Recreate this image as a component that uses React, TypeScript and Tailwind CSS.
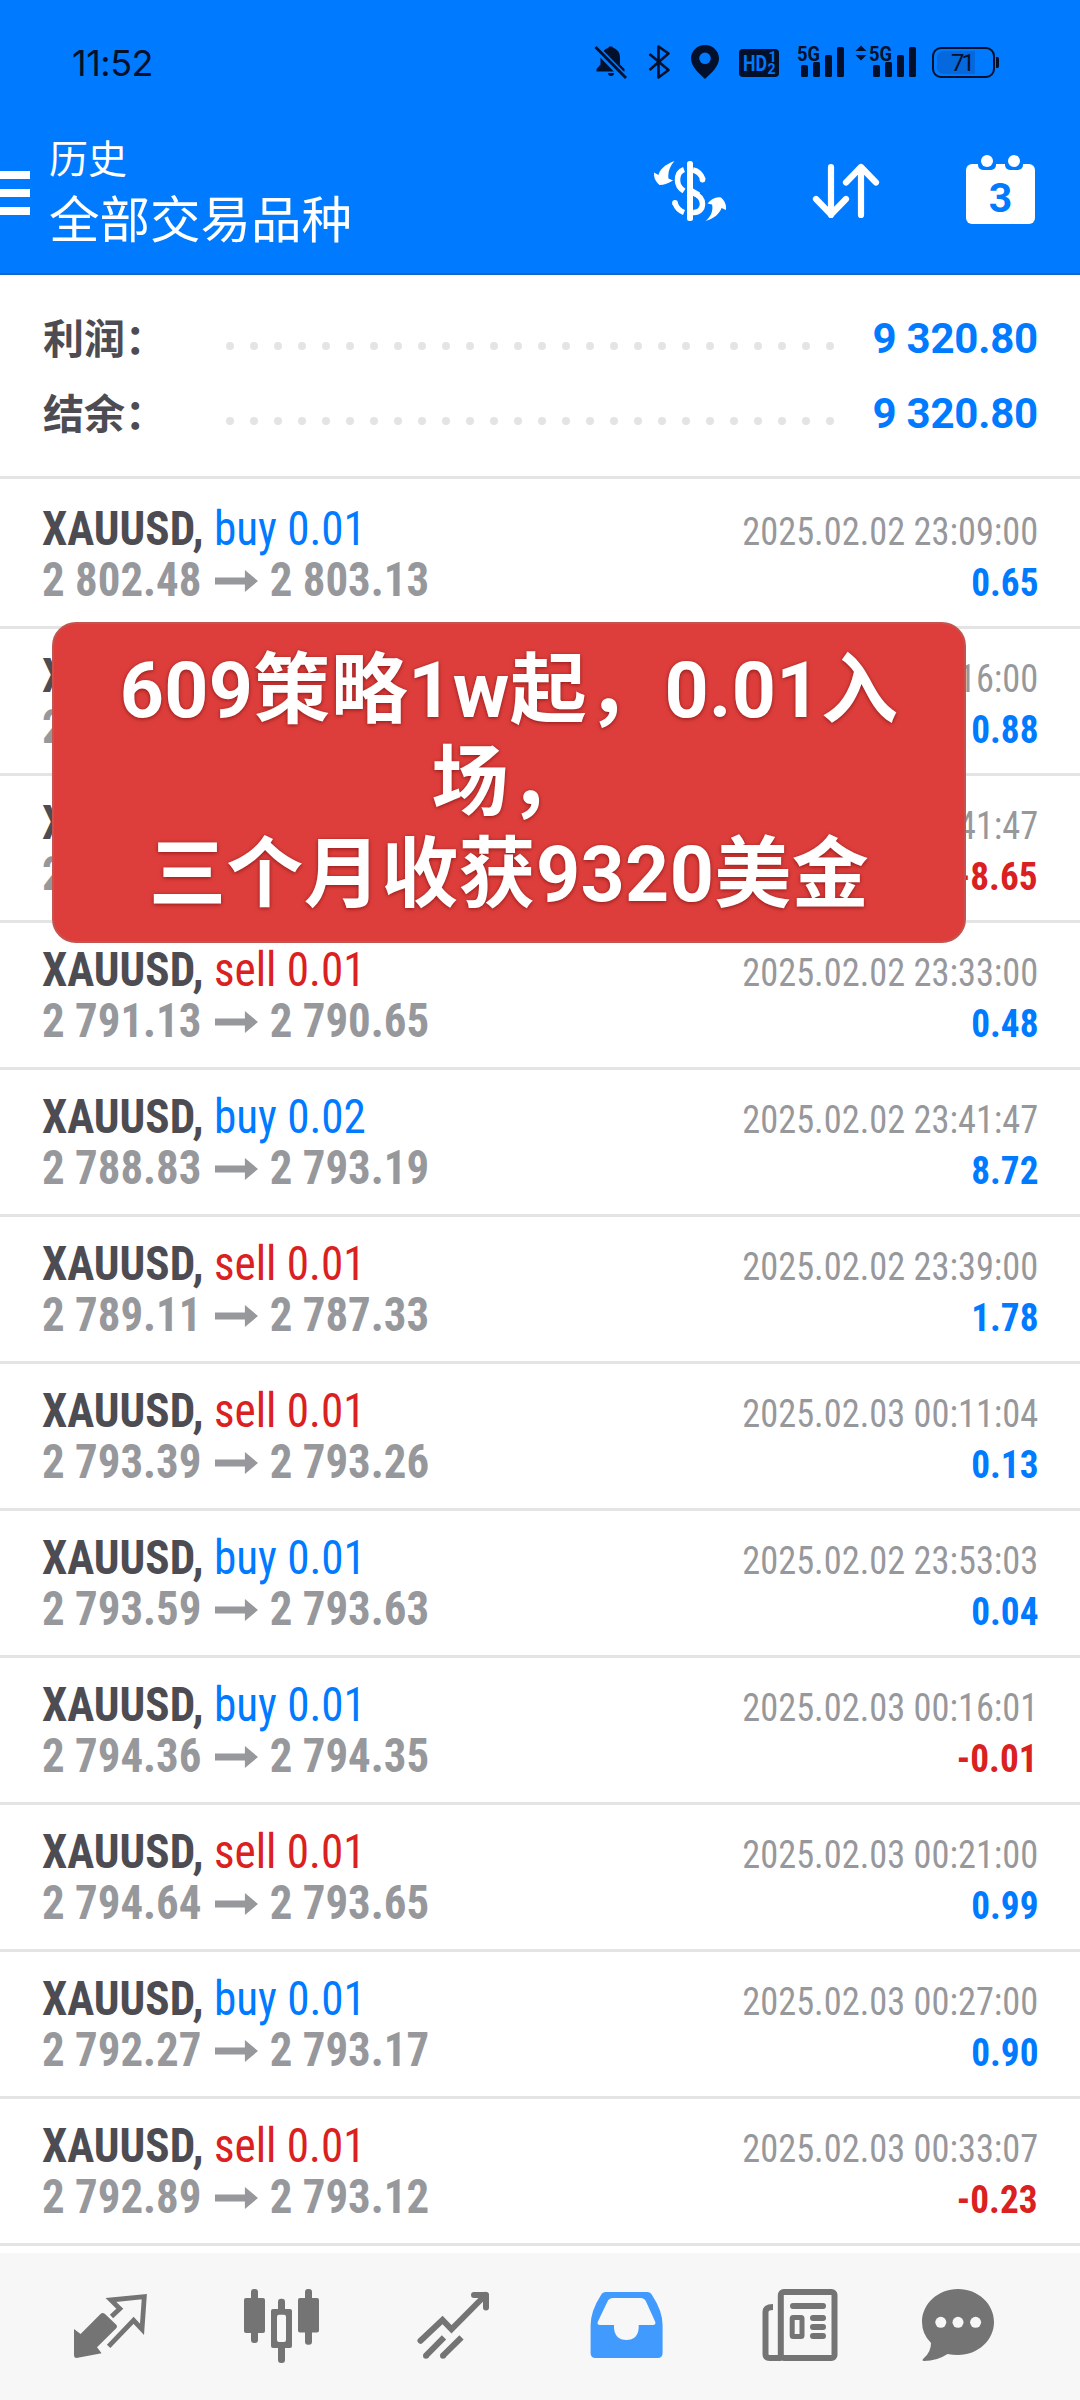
import React from 'react';

type Deal = {
  side: 'buy' | 'sell';
  volume: string;
  open: string;
  close: string;
  time: string;
  profit: string;
};

const deals: Deal[] = [
  { side: 'buy', volume: '0.01', open: '2 802.48', close: '2 803.13', time: '2025.02.02 23:09:00', profit: '0.65' },
  { side: 'buy', volume: '0.01', open: '2 802.27', close: '2 803.15', time: '2025.02.02 23:16:00', profit: '0.88' },
  { side: 'buy', volume: '0.01', open: '2 801.84', close: '2 793.19', time: '2025.02.02 23:41:47', profit: '-8.65' },
  { side: 'sell', volume: '0.01', open: '2 791.13', close: '2 790.65', time: '2025.02.02 23:33:00', profit: '0.48' },
  { side: 'buy', volume: '0.02', open: '2 788.83', close: '2 793.19', time: '2025.02.02 23:41:47', profit: '8.72' },
  { side: 'sell', volume: '0.01', open: '2 789.11', close: '2 787.33', time: '2025.02.02 23:39:00', profit: '1.78' },
  { side: 'sell', volume: '0.01', open: '2 793.39', close: '2 793.26', time: '2025.02.03 00:11:04', profit: '0.13' },
  { side: 'buy', volume: '0.01', open: '2 793.59', close: '2 793.63', time: '2025.02.02 23:53:03', profit: '0.04' },
  { side: 'buy', volume: '0.01', open: '2 794.36', close: '2 794.35', time: '2025.02.03 00:16:01', profit: '-0.01' },
  { side: 'sell', volume: '0.01', open: '2 794.64', close: '2 793.65', time: '2025.02.03 00:21:00', profit: '0.99' },
  { side: 'buy', volume: '0.01', open: '2 792.27', close: '2 793.17', time: '2025.02.03 00:27:00', profit: '0.90' },
  { side: 'sell', volume: '0.01', open: '2 792.89', close: '2 793.12', time: '2025.02.03 00:33:07', profit: '-0.23' },
];

function SignalBars() {
  return (
    <>
      <rect x="3" y="20" width="7" height="12" rx="1.5" />
      <rect x="15" y="17" width="7" height="15" rx="1.5" />
      <rect x="27" y="10" width="7" height="22" rx="1.5" />
      <rect x="39" y="2" width="7" height="30" rx="1.5" />
      <text x="-1" y="15.5" fontSize="21" fontWeight="700" textLength="23" lengthAdjust="spacingAndGlyphs">5G</text>
    </>
  );
}

function StatusBar() {
  return (
    <div className="flex h-[125px] items-start justify-between pl-[72px] pr-[81px] pt-[45px] text-[#02102b]">
      <span className="h-[36px] font-[Inter] text-[36px] leading-[36px] tracking-[-0.5px]">11:52</span>
      <svg width="404" height="34" viewBox="595 45 404 34" fill="currentColor" className="overflow-visible font-[Roboto]">
        {/* muted bell */}
        <path d="M604 50.5c1-1.2 2.4-2 4-2.5a3 3 0 0 1 5.5 0c4 1.3 6.5 5 6.5 9.5v7l4.5 4.5v2.5h-28v-2.5l4-4.5v-6.5z" />
        <path d="M608 73h6a3 3 0 0 1-6 0z" />
        <path d="M594.5 46.5l31 32" stroke="#007aff" strokeWidth="7" />
        <path d="M595.5 47l30.5 31" stroke="currentColor" strokeWidth="2.8" />
        {/* bluetooth */}
        <path d="M649.5 54l19 16-10 7.500v-31l10 7-19 16.500" fill="none" stroke="currentColor" strokeWidth="2.6" strokeLinejoin="round" />
        {/* location */}
        <path fillRule="evenodd" d="M705 45c7.800 0 14 6 14 13.500 0 7.500-7 14-14 20.500-7-6.500-14-13-14-20.500C691 51 697.200 45 705 45zm0 7.500a5.800 5.800 0 1 0 0 11.600 5.800 5.800 0 0 0 0-11.600z" />
        {/* HD voice */}
        <rect x="739" y="49" width="40" height="28" rx="4" />
        <g fill="#007aff" fontWeight="700">
          <text x="743" y="71" fontSize="22" textLength="24" lengthAdjust="spacingAndGlyphs">HD</text>
          <text x="768.5" y="61.5" fontSize="14">1</text>
          <text x="767.5" y="74" fontSize="14">2</text>
        </g>
        <g transform="translate(798 45)"><SignalBars /></g>
        <path d="M861 45.5l5.5 5.500h-11zM861 60.500l5.500-5.500h-11z" />
        <g transform="translate(870 45)"><SignalBars /></g>
        {/* battery */}
        <rect x="933" y="48" width="61" height="29" rx="8" fill="none" stroke="currentColor" strokeWidth="2" />
        <path d="M944 51h31v23h-31q-7 0-7-7v-9q0-7 7-7z" fill="#0568dd" />
        <path d="M996 57h1.500q1.500 0 1.500 2v7q0 2-1.500 2H996z" />
        <text x="951" y="71" fontSize="24" textLength="24">71</text>
      </svg>
    </div>
  );
}

function AppBar() {
  return (
    <div className="flex h-[148px] items-start">
      <div className="mt-[46px] flex w-[30px] flex-col gap-[10px]">
        <div className="h-2 bg-white" />
        <div className="h-2 bg-white" />
        <div className="h-2 bg-white" />
      </div>
      <div className="ml-[19px] mt-[5px] flex flex-1 flex-col font-['Noto_Sans_CJK_SC',sans-serif] text-white">
        <span className="text-[39px] leading-[52px]">历史</span>
        <span className="text-[50.5px] leading-[68px]">全部交易品种</span>
      </div>
      <svg width="72" height="62" viewBox="654 160 72 62" fill="#fff" className="mt-[35px]">
        <path d="M674.500 161C664 165 659.500 170 658.500 175L654 172.500C653.500 178 656 182 659.500 185C664 185 669 183 673 180.500L668.500 178.500C667.500 172 670 166 674.500 161z" />
        <path d="M705.500 221C711 217 713.500 210 712 204.500L707.500 203.500C711 199 716 196.500 721 197.500C725 201 726.500 205 726 210L721.500 208C720 213 714 219 705.500 221z" />
        <rect x="687" y="161" width="6" height="60" rx="2.5" />
        <path d="M684 169.500c-4 1.500-6.500 5-6.500 10.500s2.500 8.500 6.500 11M693 170c5 1 8 4 10 9.500M693 193c7 2.500 9.500 6.500 9.500 11 0 5-3.500 9-9.500 8.500M684 212.500c-4-1.500-7.500-5-9-9.500" fill="none" stroke="#fff" strokeWidth="5.5" />
        <circle cx="675" cy="203" r="2.9" />
        <circle cx="702.5" cy="179.5" r="2.9" />
        <path d="M693 188.500l7 4-3 5-4-2z" />
      </svg>
      <svg width="68" height="56" viewBox="812 163 68 56" fill="none" stroke="#fff" strokeWidth="6.2" strokeLinecap="round" strokeLinejoin="round" className="ml-[86px] mt-[38px]">
        <path d="M831 167v48M816 199l15 15.500 15-15.500M861 215v-48M846 182.500l15-15.500 15 15.500" />
      </svg>
      <svg width="70" height="72" viewBox="966 154 70 72" className="ml-[86px] mr-[44px] mt-[29px]">
        <rect x="966" y="164" width="69" height="60" rx="6" fill="#fff" />
        <rect x="978" y="152" width="18" height="18" rx="5" fill="#007aff" />
        <rect x="1005" y="152" width="18" height="18" rx="5" fill="#007aff" />
        <circle cx="987" cy="161" r="6" fill="#fff" />
        <circle cx="1014" cy="161" r="6" fill="#fff" />
        <text x="1000.5" y="211.5" textAnchor="middle" fill="#007aff" fontSize="41" fontWeight="700" className="font-[Roboto]">3</text>
      </svg>
    </div>
  );
}

function SummaryRow({ label, value }: { label: string; value: string }) {
  return (
    <div className="flex h-[75px] items-center pl-[43px] pr-[42px] font-bold">
      <span className="mb-[3px] w-[183px] font-['Noto_Sans_CJK_SC',sans-serif] text-[41px] text-[#4d4c52]">{label}</span>
      <div className="mt-[14px] flex w-[608px] justify-between">
        {Array.from({ length: 26 }, (_, i) => (
          <span key={i} className="size-2 rounded-full bg-[#e4e4e4]" />
        ))}
      </div>
      <span className="ml-auto font-[Roboto] text-[42px] tracking-[-0.2px] text-[#007aff]">{value}</span>
    </div>
  );
}

function DealRow({ deal }: { deal: Deal }) {
  const sideColor = deal.side === 'buy' ? 'text-[#007aff]' : 'text-[#da2020]';
  const profitColor = deal.profit.startsWith('-') ? 'text-[#da2020]' : 'text-[#007aff]';

  return (
    <div className="h-[147px] border-b-[3px] border-[#e4e4e4] pl-[42px] pr-[42px] pt-[21px] font-['Roboto_Condensed',Roboto] text-[48px] leading-[51px] [font-stretch:75%]">
      <div className="flex h-[51px] items-baseline justify-between whitespace-pre">
        <span className="origin-left scale-x-[0.94]">
          <b className="text-[#4d4c52]">XAUUSD, </b>
          <span className={sideColor}>{deal.side} {deal.volume}</span>
        </span>
        <span className="origin-right scale-x-[0.933] text-[39px] text-[#97989c]">{deal.time}</span>
      </div>
      <div className="flex h-[51px] items-baseline justify-between whitespace-pre font-bold">
        <span className="flex origin-left scale-x-[0.935] items-center text-[#97989c]">
          {deal.open}
          <svg width="46" height="22" viewBox="0 0 46 22" fill="currentColor" className="ml-[14px] mr-[13px] mt-[3px]">
            <path d="M0 7.500h32V0l14 11-14 11v-7.500H0z" />
          </svg>
          {deal.close}
        </span>
        <span className={`origin-right scale-x-[0.955] text-[39px] ${profitColor}`}>{deal.profit}</span>
      </div>
    </div>
  );
}

function TabBar() {
  return (
    <nav className="flex h-[147px] items-start bg-[#f7f7f7] px-6 pt-[25px] text-[#747474]">
      <div className="flex flex-1 justify-center">
        <svg width="96" height="96" viewBox="0 0 96 96" fill="currentColor">
          <path d="M12 51l6.600 5L38.500 36q2-2 4.500 0L54 46.500q2 2 0 4L35 69.300l4.600 6L14.500 80Q12 80 12 77z" />
          <path d="M49.500 38.500l8.300-7.800-8.900-8.700 33.400-3.300-2.300 32.600-8.400-9-25 26" fill="none" stroke="currentColor" strokeWidth="4.8" />
        </svg>
      </div>
      <div className="flex flex-1 justify-center">
        <svg width="96" height="96" viewBox="0 0 96 96" fill="currentColor">
          <rect x="10" y="20" width="21" height="35" rx="2" />
          <rect x="17" y="11" width="7" height="54" rx="3" />
          <rect x="44" y="20.7" width="7" height="64.3" rx="3" />
          <rect x="37" y="31" width="21" height="39" rx="2" />
          <rect x="43" y="36.7" width="9" height="27.3" rx="2" fill="#f7f7f7" />
          <rect x="64" y="20" width="21" height="34.5" rx="2" />
          <rect x="71" y="11" width="7" height="55.7" rx="3" />
        </svg>
      </div>
      <div className="flex flex-1 justify-center">
        <svg width="96" height="96" viewBox="0 0 96 96" fill="none" stroke="currentColor" strokeWidth="6" strokeLinecap="round">
          <path d="M14.500 62.700L36.500 42l9 9.300L79.500 17" />
          <path d="M68 17h12v12.500" strokeLinejoin="round" />
          <path d="M20 77.700l18-18.400M37 77.700l18.500-18.400" strokeLinecap="butt" />
          <path d="M20 77.700h0M37 77.700h0" />
        </svg>
      </div>
      <div className="flex flex-1 justify-center text-[#419bff]">
        <svg width="96" height="96" viewBox="0 0 96 96" fill="currentColor">
          <path fillRule="evenodd" d="M28 14h41q3.500 0 5 3 10.500 16 10.600 30v28q0 5-5 5H17.600q-5 0-5-5V47Q12.700 33 23 17q1.500-3 5-3zM35 20q-4 0-5.500 3.500L19.700 44q-.7 3 2.300 3h14v3q1 12 12.400 12T60.700 50v-3H75q3 0 2.300-3L68 23.500Q66.500 20 62.500 20z" />
        </svg>
      </div>
      <div className="flex flex-1 justify-center">
        <svg width="96" height="96" viewBox="0 0 96 96" fill="none" stroke="currentColor" strokeWidth="6">
          <rect x="30.8" y="14" width="53.7" height="66" rx="3" />
          <path d="M23 29q-7.500 0-7.500 5v42q0 4 4 4h12" />
          <path d="M43 28h30M63 40h10M63 49h10M63 58h10" strokeLinecap="round" />
          <rect x="42.2" y="39.5" width="9.8" height="19" rx="1" strokeWidth="5" />
        </svg>
      </div>
      <div className="flex flex-1 justify-center">
        <svg width="96" height="96" viewBox="0 0 96 96" fill="currentColor" className="overflow-visible">
          <path d="M36 11c20 0 36 14.800 36 33S56 77 36 77q-5.500 0-10.500-1Q15 83 2 83q-3-.5 0-3 7-6 7-15Q0 56 0 44C0 25.800 16 11 36 11z" />
          <g fill="#f7f7f7">
            <circle cx="18.8" cy="44.3" r="5.5" />
            <circle cx="36" cy="44.3" r="5.5" />
            <circle cx="53.6" cy="44.3" r="5.5" />
          </g>
        </svg>
      </div>
    </nav>
  );
}

export default function App() {
  return (
    <div className="relative flex h-[2400px] w-[1080px] flex-col overflow-hidden bg-white">
      <header className="h-[275px] shrink-0 border-b-2 border-[#1268c8] bg-[#007aff]">
        <StatusBar />
        <AppBar />
      </header>

      <section className="h-[204px] shrink-0 border-b-[3px] border-[#e4e4e4] pt-[26px]">
        <SummaryRow label="利润：" value="9 320.80" />
        <SummaryRow label="结余：" value="9 320.80" />
      </section>

      <main className="flex-1 pt-[3px]">
        {deals.map((deal, i) => (
          <DealRow key={i} deal={deal} />
        ))}
      </main>

      <TabBar />

      {/* Promo caption floating over the list */}
      <div className="absolute left-[52px] top-[622px] flex h-[321px] w-[914px] flex-col items-center rounded-[24px] border-2 border-[#c4544f] bg-[#de3e3b] pt-[21px] text-center font-[Roboto,'Noto_Sans_CJK_SC',sans-serif] text-[77px] font-bold leading-[92px] tracking-[0.4px] text-white [text-shadow:0_1px_4px_rgba(80,0,0,0.6)]">
        <div>609策略1w起，0.01入</div>
        <div>场，</div>
        <div>三个月收获9320美金</div>
      </div>
    </div>
  );
}
